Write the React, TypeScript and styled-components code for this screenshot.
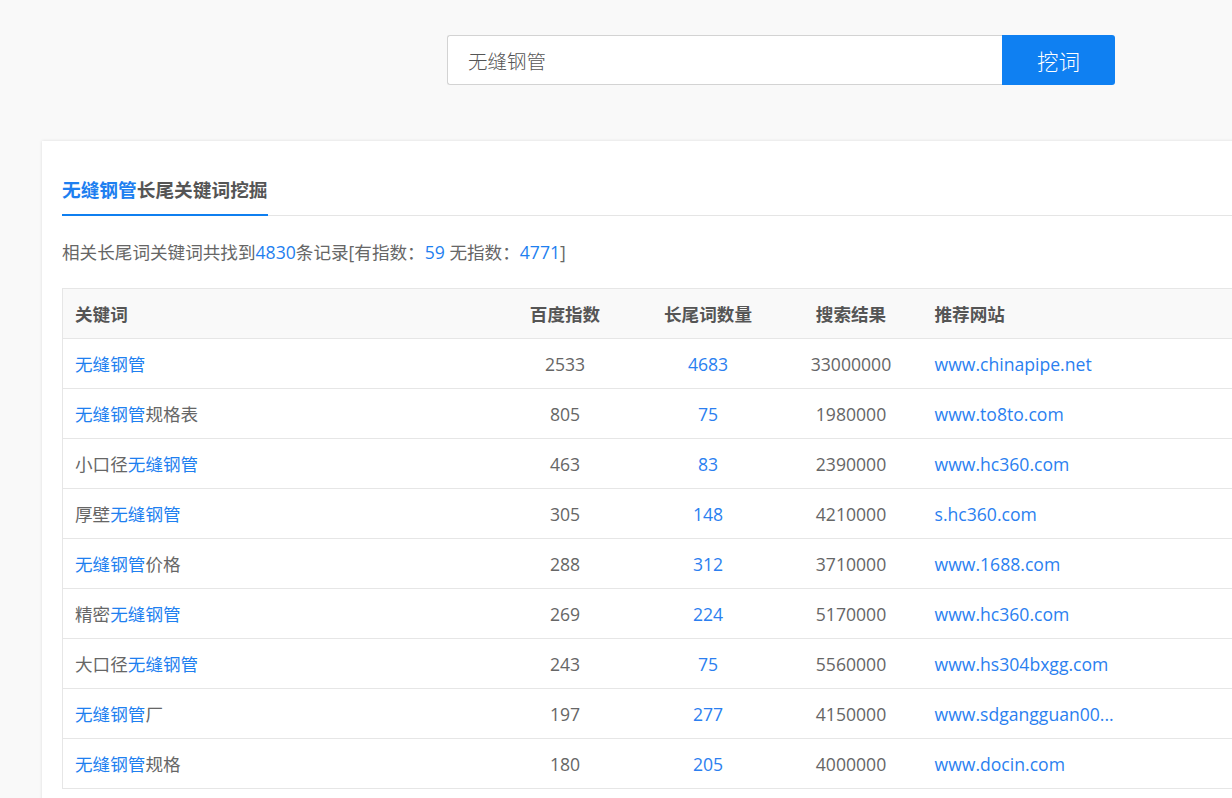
import React from "react";
import styled, { createGlobalStyle } from "styled-components";

const Global = createGlobalStyle`
  html, body { margin: 0; padding: 0; background: #f9f9f9; overflow: hidden; }
  body { font-family: "Open Sans", "Noto Sans CJK SC", sans-serif; color: #666; }
  * { box-sizing: border-box; }
`;

const Page = styled.div`
  width: 1400px;
  height: 798px;
  overflow: hidden;
`;

const SearchBar = styled.form`
  display: flex;
  padding: 35px 0 0 447px;
  margin: 0;
`;

const SearchInput = styled.input`
  width: 555px;
  height: 50px;
  border: 1px solid #d3d3d3;
  border-right: none;
  border-radius: 3px 0 0 3px;
  padding: 0 20px;
  font-family: "Noto Sans CJK SC", sans-serif;
  font-weight: 300;
  font-size: 19.5px;
  color: #555;
  background: #fff;
  outline: none;
`;

const SearchButton = styled.button`
  width: 113px;
  height: 50px;
  border: none;
  border-radius: 0 3px 3px 0;
  background: #0f80f2;
  color: #fff;
  font-family: "Noto Sans CJK SC", sans-serif;
  font-size: 21.5px;
  font-weight: 300;
  cursor: pointer;
`;

const Card = styled.section`
  margin: 56px 0 0 42px;
  width: 1300px;
  min-height: 700px;
  background: #fff;
  box-shadow: 0 0 3px rgba(0, 0, 0, 0.12);
  padding: 0 20px;
`;

const Tabs = styled.div`
  display: flex;
  border-bottom: 1px solid #e5e5e5;
  padding-top: 36px;
`;

const Tab = styled.div`
  font-size: 18.7px;
  font-weight: 700;
  line-height: 24px;
  color: #555;
  padding-bottom: 13px;
  border-bottom: 2px solid #0f7ff0;
  margin-bottom: -1px;
  font-family: "Noto Sans CJK SC", sans-serif;
`;

const Hl = styled.span`
  color: #1e7ff0;
`;

const Summary = styled.p`
  margin: 24px 0 24px;
  font-size: 17.6px;
  line-height: 24px;
  color: #666;
`;

const Table = styled.table`
  border-collapse: collapse;
  table-layout: fixed;
  width: 1260px;
  font-size: 17.6px;
  border-left: 1px solid #e6e6e6;
  border-top: 1px solid #e6e6e6;
`;

const Th = styled.th<{ $align?: string; $w?: number }>`
  height: 50px;
  background: #f9f9f9;
  font-weight: 700;
  font-size: 17.6px;
  color: #555;
  text-align: ${(p) => p.$align || "center"};
  padding: 0 12px;
  border-bottom: 1px solid #e6e6e6;
  width: ${(p) => (p.$w ? `${p.$w}px` : "auto")};
  font-family: "Noto Sans CJK SC", sans-serif;
`;

const Td = styled.td<{ $align?: string; $blue?: boolean }>`
  height: 50px;
  padding: 0 12px;
  border-bottom: 1px solid #e6e6e6;
  text-align: ${(p) => p.$align || "center"};
  color: ${(p) => (p.$blue ? "#2b7ff0" : "#666")};
  white-space: nowrap;
  overflow: hidden;
`;

type Row = { kw: [string, boolean][]; idx: string; cnt: string; res: string; site: string };

const K = "无缝钢管";
const rows: Row[] = [
  { kw: [[K, true]], idx: "2533", cnt: "4683", res: "33000000", site: "www.chinapipe.net" },
  { kw: [[K, true], ["规格表", false]], idx: "805", cnt: "75", res: "1980000", site: "www.to8to.com" },
  { kw: [["小口径", false], [K, true]], idx: "463", cnt: "83", res: "2390000", site: "www.hc360.com" },
  { kw: [["厚壁", false], [K, true]], idx: "305", cnt: "148", res: "4210000", site: "s.hc360.com" },
  { kw: [[K, true], ["价格", false]], idx: "288", cnt: "312", res: "3710000", site: "www.1688.com" },
  { kw: [["精密", false], [K, true]], idx: "269", cnt: "224", res: "5170000", site: "www.hc360.com" },
  { kw: [["大口径", false], [K, true]], idx: "243", cnt: "75", res: "5560000", site: "www.hs304bxgg.com" },
  { kw: [[K, true], ["厂", false]], idx: "197", cnt: "277", res: "4150000", site: "www.sdgangguan00..." },
  { kw: [[K, true], ["规格", false]], idx: "180", cnt: "205", res: "4000000", site: "www.docin.com" },
];

export default function App() {
  return (
    <Page>
      <Global />
      <SearchBar onSubmit={(e) => e.preventDefault()}>
        <SearchInput defaultValue="无缝钢管" />
        <SearchButton type="submit">挖词</SearchButton>
      </SearchBar>
      <Card>
        <Tabs>
          <Tab>
            <Hl>无缝钢管</Hl>长尾关键词挖掘
          </Tab>
        </Tabs>
        <Summary>
          相关长尾词关键词共找到<Hl>4830</Hl>条记录[有指数：<Hl>59</Hl> 无指数：<Hl>4771</Hl>]
        </Summary>
        <Table>
          <thead>
            <tr>
              <Th $align="left" $w={431}>关键词</Th>
              <Th $w={143}>百度指数</Th>
              <Th $w={143}>长尾词数量</Th>
              <Th $w={143}>搜索结果</Th>
              <Th $align="left" $w={210}>推荐网站</Th>
              <Th />
            </tr>
          </thead>
          <tbody>
            {rows.map((r, i) => (
              <tr key={i}>
                <Td $align="left">
                  {r.kw.map(([t, b], j) => (b ? <Hl key={j}>{t}</Hl> : <span key={j}>{t}</span>))}
                </Td>
                <Td>{r.idx}</Td>
                <Td $blue>{r.cnt}</Td>
                <Td>{r.res}</Td>
                <Td $align="left" $blue>{r.site}</Td>
                <Td />
              </tr>
            ))}
          </tbody>
        </Table>
      </Card>
    </Page>
  );
}
